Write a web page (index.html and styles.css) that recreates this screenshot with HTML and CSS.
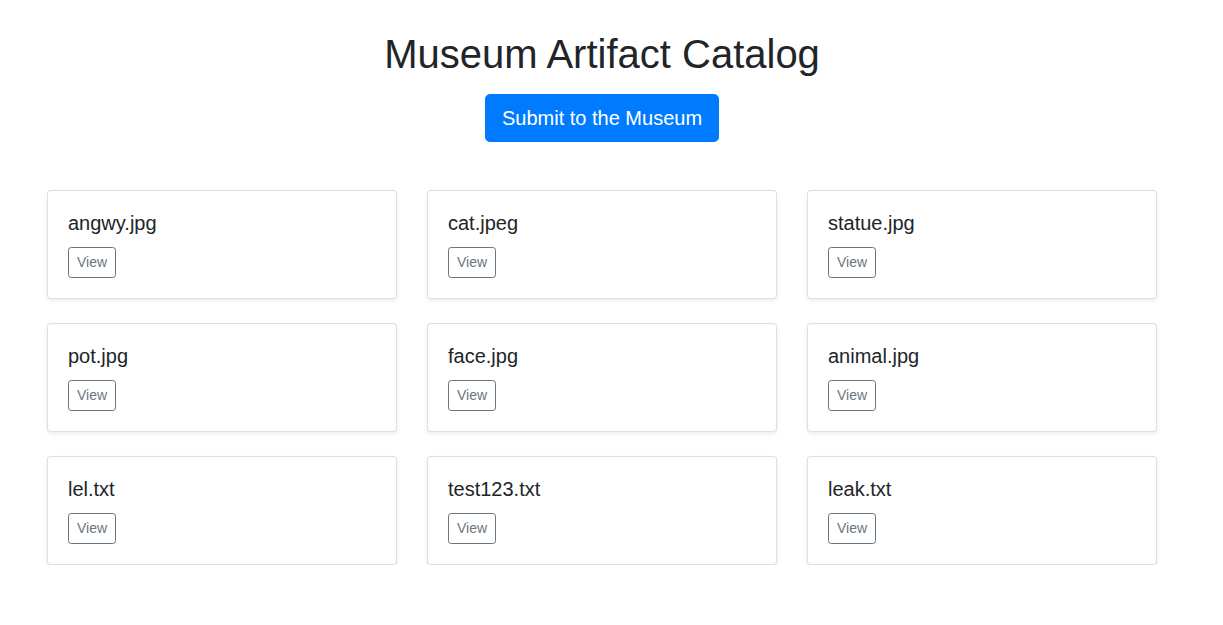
FILE: index.html
```html
<!DOCTYPE html>
<html lang="en">
<head>
<meta charset="utf-8">
<title>Museum Artifact Catalog</title>
<link rel="stylesheet" href="styles.css">
</head>
<body>
<div class="page">
  <header class="header">
    <h1 class="title">Museum Artifact Catalog</h1>
    <a class="btn-primary" href="#">Submit to the Museum</a>
  </header>
  <main class="grid">
    <div class="card"><h5 class="card-title">angwy.jpg</h5><a class="btn-view" href="#">View</a></div>
    <div class="card"><h5 class="card-title">cat.jpeg</h5><a class="btn-view" href="#">View</a></div>
    <div class="card"><h5 class="card-title">statue.jpg</h5><a class="btn-view" href="#">View</a></div>
    <div class="card"><h5 class="card-title">pot.jpg</h5><a class="btn-view" href="#">View</a></div>
    <div class="card"><h5 class="card-title">face.jpg</h5><a class="btn-view" href="#">View</a></div>
    <div class="card"><h5 class="card-title">animal.jpg</h5><a class="btn-view" href="#">View</a></div>
    <div class="card"><h5 class="card-title">lel.txt</h5><a class="btn-view" href="#">View</a></div>
    <div class="card"><h5 class="card-title">test123.txt</h5><a class="btn-view" href="#">View</a></div>
    <div class="card"><h5 class="card-title">leak.txt</h5><a class="btn-view" href="#">View</a></div>
  </main>
</div>
</body>
</html>
```
FILE: styles.css
```css
* { box-sizing: border-box; }
html, body {
  margin: 0;
  padding: 0;
  background: #fff;
}
body {
  font-family: "Liberation Sans", Arial, Helvetica, sans-serif;
  font-size: 16px;
  line-height: 1.5;
  color: #212529;
}
.page {
  width: 1110px;
  margin-left: 47px;
}
.header {
  display: flex;
  flex-direction: column;
  align-items: center;
}
.title {
  margin: 30px 0 0;
  font-size: 40px;
  font-weight: 400;
  line-height: 48px;
}
.btn-primary {
  margin-top: 16px;
  display: inline-block;
  padding: 8px 16px;
  font-size: 20px;
  line-height: 30px;
  color: #fff;
  background: #007bff;
  border: 1px solid #007bff;
  border-radius: 4.8px;
  text-decoration: none;
}
.grid {
  margin-top: 48px;
  display: grid;
  grid-template-columns: repeat(3, 350px);
  column-gap: 30px;
  row-gap: 24px;
}
.card {
  border: 1px solid rgba(0,0,0,.125);
  border-radius: 4px;
  box-shadow: 0 2px 4px rgba(0,0,0,.075);
  padding: 20px;
  display: flex;
  flex-direction: column;
  align-items: flex-start;
  background: #fff;
}
.card-title {
  margin: 0 0 12px;
  font-size: 20px;
  font-weight: 400;
  line-height: 24px;
}
.btn-view {
  display: inline-block;
  padding: 4px 8px;
  font-size: 14px;
  line-height: 21px;
  color: #6c757d;
  border: 1px solid #6c757d;
  border-radius: 3.2px;
  text-decoration: none;
}
```
